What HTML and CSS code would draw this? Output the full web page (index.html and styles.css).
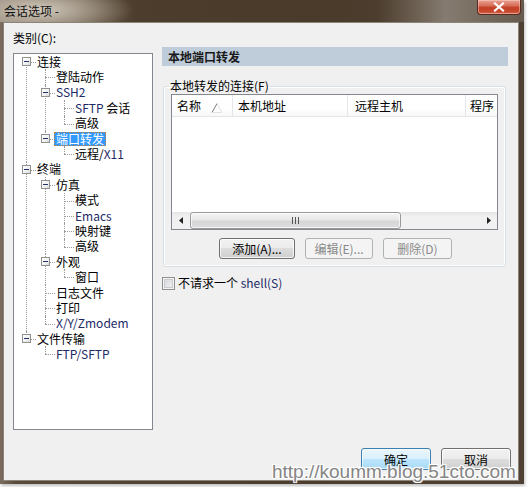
FILE: index.html
```html
<!DOCTYPE html>
<html>
<head>
<meta charset="utf-8">
<link rel="stylesheet" href="styles.css">
</head>
<body>
<div class="window">
  <div class="titlebar">
    <span class="title">会话选项 -</span>
    <span class="close"><svg width="14" height="10" viewBox="0 0 14 10"><path d="M3 1.5 L11 8.5 M11 1.5 L3 8.5" stroke="#fff" stroke-width="2.2" stroke-linecap="square"/></svg></span>
  </div>
  <div class="client">
    <div class="main">
      <div class="left">
        <div class="cat-label">类别(C):</div>
        <div class="tree-box">
          <ul class="tree root">
            <li><div class="row"><span class="tog"></span><span class="txt">连接</span></div>
              <ul>
                <li><div class="row"><span class="sp"></span><span class="txt">登陆动作</span></div></li>
                <li><div class="row"><span class="tog"></span><span class="txt lat">SSH2</span></div>
                  <ul>
                    <li><div class="row"><span class="sp"></span><span class="txt"><span class="lat">SFTP</span> 会话</span></div></li>
                    <li><div class="row"><span class="sp"></span><span class="txt">高级</span></div></li>
                  </ul>
                </li>
                <li><div class="row"><span class="tog"></span><span class="txt sel">端口转发</span></div>
                  <ul>
                    <li><div class="row"><span class="sp"></span><span class="txt">远程/<span class="lat">X11</span></span></div></li>
                  </ul>
                </li>
              </ul>
            </li>
            <li><div class="row"><span class="tog"></span><span class="txt">终端</span></div>
              <ul>
                <li><div class="row"><span class="tog"></span><span class="txt">仿真</span></div>
                  <ul>
                    <li><div class="row"><span class="sp"></span><span class="txt">模式</span></div></li>
                    <li><div class="row"><span class="sp"></span><span class="txt lat">Emacs</span></div></li>
                    <li><div class="row"><span class="sp"></span><span class="txt">映射键</span></div></li>
                    <li><div class="row"><span class="sp"></span><span class="txt">高级</span></div></li>
                  </ul>
                </li>
                <li><div class="row"><span class="tog"></span><span class="txt">外观</span></div>
                  <ul>
                    <li><div class="row"><span class="sp"></span><span class="txt">窗口</span></div></li>
                  </ul>
                </li>
                <li><div class="row"><span class="sp"></span><span class="txt">日志文件</span></div></li>
                <li><div class="row"><span class="sp"></span><span class="txt">打印</span></div></li>
                <li><div class="row"><span class="sp"></span><span class="txt lat">X/Y/Zmodem</span></div></li>
              </ul>
            </li>
            <li><div class="row"><span class="tog"></span><span class="txt">文件传输</span></div>
              <ul>
                <li><div class="row"><span class="sp"></span><span class="txt lat">FTP/SFTP</span></div></li>
              </ul>
            </li>
          </ul>
        </div>
      </div>
      <div class="right">
        <div class="panel-head">本地端口转发</div>
        <fieldset class="group">
          <legend>本地转发的连接(F)</legend>
          <div class="listview">
            <div class="lv-head">
              <div class="col c1"><span>名称</span><svg class="sort" width="12" height="10" viewBox="0 0 12 10"><path d="M1 9.5 L6 0.5" stroke="#7d7d7d" stroke-width="1" fill="none"/><path d="M6 0.5 L11 9.5 L1 9.5" stroke="#e2e2e2" stroke-width="1" fill="none"/></svg></div>
              <div class="col c2">本机地址</div>
              <div class="col c3">远程主机</div>
              <div class="col c4">程序</div>
            </div>
            <div class="lv-body"></div>
            <div class="hscroll">
              <div class="sbtn"><svg width="4" height="7" viewBox="0 0 4 7"><path d="M4 0 L0 3.5 L4 7 Z" fill="#222"/></svg></div>
              <div class="track">
                <div class="thumb"><svg width="7" height="7" viewBox="0 0 7 7"><path d="M0.5 0 V7 M3.5 0 V7 M6.5 0 V7" stroke="#555" stroke-width="1"/></svg></div>
              </div>
              <div class="sbtn"><svg width="4" height="7" viewBox="0 0 4 7"><path d="M0 0 L4 3.5 L0 7 Z" fill="#222"/></svg></div>
            </div>
          </div>
          <div class="btn-row">
            <button class="btn w76">添加(A)...</button>
            <button class="btn dis w68">编辑(E)...</button>
            <button class="btn dis w69">删除(D)</button>
          </div>
        </fieldset>
        <label class="chk"><span class="box"></span><span>不请求一个 <span class="lat2">shell(S)</span></span></label>
      </div>
    </div>
    <div class="footer">
      <button class="btn def w70">确定</button>
      <button class="btn w70">取消</button>
    </div>
  </div>
  <div class="watermark">http://koumm.blog.51cto.com</div>
</div>
</body>
</html>
```
FILE: styles.css
```css
* { box-sizing: border-box; }
html, body {
  margin: 0;
  padding: 0;
  background: #ffffff;
  width: 528px;
  height: 487px;
  overflow: hidden;
}
body {
  font-family: "Noto Sans CJK SC", "Noto Sans", sans-serif;
  font-size: 12px;
  color: #000;
}
.window {
  position: relative;
  width: 524px;
  height: 484px;
  background: linear-gradient(to right, #7b6e60 0%, #5a4a3a 3%, #4c3d2e 50%, #4e4032 100%);
  display: flex;
  flex-direction: column;
  box-shadow: 1px 2px 3px rgba(0,0,0,0.25);
}
.titlebar {
  height: 22px;
  display: flex;
  align-items: flex-start;
  background:
    radial-gradient(ellipse 95px 26px at 38px 10px, rgba(215,207,195,0.95) 0%, rgba(190,180,165,0.7) 45%, rgba(160,150,135,0) 100%),
    linear-gradient(to right, #8a7e70 0%, #6e604f 14%, #4d3d2c 26%, #4a3a2a 60%, #4c3d2e 72%, #6f6355 80%, #857b70 85%, #7a7064 90%, #655a4d 100%);
}
.title {
  padding: 3px 0 0 4px;
  font-size: 12px;
  line-height: 15px;
  color: #111;
}
.close {
  margin-left: auto;
  margin-right: 3px;
  width: 44px;
  height: 15px;
  border: 1px solid #5a2a20;
  border-top: none;
  border-radius: 0 0 4px 4px;
  background: linear-gradient(to bottom, #e9a394 0%, #d86e58 40%, #c23f24 55%, #c84a2e 85%, #d9735c 100%);
  box-shadow: inset 0 0 0 1px rgba(255,220,210,0.45);
  display: flex;
  align-items: center;
  justify-content: center;
}
.client {
  margin: 0 5px 3px 3px;
  flex: 1;
  background: #f0f0f0;
  border: 1px solid #8d8478;
  display: flex;
  flex-direction: column;
  padding: 7px 7px 10px 9px;
}
.main {
  display: flex;
  gap: 9px;
  align-items: flex-start;
}
.left { width: 140px; flex: none; }
.cat-label {
  line-height: 16px;
  height: 16px;
}
.tree-box {
  margin-top: 7px;
  height: 377px;
  background: #fff;
  border: 1px solid #828790;
  overflow: hidden;
}
.tree, .tree ul {
  list-style: none;
  margin: 0;
  padding: 0;
}
.tree ul { padding-left: 19px; }
.tree li { position: relative; }
.tree li::before {
  content: "";
  position: absolute;
  left: 12px;
  top: 0;
  bottom: 0;
  border-left: 1px dotted #9a9a9a;
}
.tree li:last-child::before { bottom: auto; height: 8px; }
.tree.root > li:first-child::before { top: 8px; }
.row {
  position: relative;
  height: 15.4px;
  display: flex;
  align-items: center;
  padding-left: 8px;
}
.row::before {
  content: "";
  position: absolute;
  left: 12px;
  top: 8px;
  width: 10px;
  border-top: 1px dotted #9a9a9a;
}
.tog, .sp {
  position: relative;
  z-index: 1;
  width: 9px;
  height: 9px;
  margin-right: 6px;
  flex: none;
}
.tog {
  border: 1px solid #919191;
  background: linear-gradient(135deg, #ffffff 0%, #f0f0f0 60%, #d8d8d8 100%);
}
.tog::after {
  content: "";
  position: absolute;
  left: 1px;
  top: 3px;
  width: 5px;
  height: 1px;
  background: #24306a;
}
.txt {
  position: relative;
  z-index: 1;
  line-height: 14px;
  white-space: nowrap;
  color: #000;
}
.lat { color: #1d2a66; }
.txt.sel {
  background: #3399ff;
  color: #fff;
  padding: 0 2px;
  margin-left: -2px;
  outline: 1px dotted #c08040;
  outline-offset: -1px;
}
.right {
  width: 346px;
  flex: none;
  margin-top: 17px;
}
.panel-head {
  height: 19px;
  line-height: 19px;
  background: #bfcddb;
  padding-left: 6px;
  font-weight: bold;
  color: #1a1a1a;
}
.group {
  min-width: 0;
  width: 343px;
  margin: 13px 0 0 1px;
  border: 1px solid #d5dfe5;
  border-radius: 3px;
  padding: 1px 7px 7px 7px;
  box-shadow: inset 0 0 0 1px #ffffff;
}
.group legend {
  padding: 0 1px;
  margin-left: -2px;
  line-height: 14px;
  font-size: 12px;
}
.listview {
  width: 327px;
  height: 136px;
  background: #fff;
  border: 1px solid #828790;
  display: flex;
  flex-direction: column;
  overflow: hidden;
}
.lv-head {
  height: 22px;
  flex: none;
  display: flex;
  border-bottom: 1px solid #e5e5e5;
  background: linear-gradient(#ffffff, #ffffff 60%, #f7f8f9);
  overflow: hidden;
  white-space: nowrap;
}
.col {
  display: flex;
  align-items: center;
  padding-left: 5px;
  border-right: 1px solid #e3e6ea;
  flex: none;
}
.c1 { width: 61px; }
.c2 { width: 115px; }
.c3 { width: 118px; padding-left: 7px; }
.c4 { width: 60px; padding-left: 4px; border-right: none; }
.sort { margin-left: auto; margin-right: 9px; margin-top: 5px; }
.lv-body { flex: 1; }
.hscroll {
  height: 17px;
  flex: none;
  display: flex;
  background: linear-gradient(#e6e6e6, #f1f1f1 30%, #f1f1f1);
}
.sbtn {
  width: 17px;
  display: flex;
  align-items: center;
  justify-content: center;
  flex: none;
}
.track {
  flex: 1;
  display: flex;
  padding: 0 0 0 1px;
  min-width: 0;
}
.thumb {
  width: 211px;
  flex: none;
  border: 1px solid #9a9a9a;
  border-radius: 3px;
  background: linear-gradient(to bottom, #f4f4f4 0%, #e8e8e8 45%, #d6d6d6 55%, #dcdcdc 100%);
  box-shadow: inset 0 0 0 1px rgba(255,255,255,0.7);
  display: flex;
  align-items: center;
  justify-content: center;
}
.btn-row {
  display: flex;
  justify-content: center;
  gap: 10px;
  margin-top: 8px;
  padding-left: 2px;
}
.btn {
  font-family: "Noto Sans CJK SC", "Noto Sans", sans-serif;
  font-size: 12px;
  height: 21px;
  padding: 0;
  line-height: 17px;
  color: #000;
  border: 1px solid #707070;
  border-radius: 3px;
  background: linear-gradient(to bottom, #f2f2f2 0%, #ebebeb 50%, #dddddd 50%, #cfcfcf 100%);
  box-shadow: inset 0 0 0 1px rgba(255,255,255,0.75);
}
.btn.dis {
  border-color: #adb2b5;
  background: #f4f4f4;
  color: #8a8a8a;
  box-shadow: none;
}
.btn.def {
  border-color: #3c7fb1;
  background: linear-gradient(to bottom, #eaf6fd 0%, #d9f0fc 50%, #bee6fd 50%, #a7d9f5 100%);
  box-shadow: inset 0 0 0 1px rgba(255,255,255,0.6);
}
.w76 { width: 76px; }
.w68 { width: 68px; }
.w69 { width: 69px; }
.w70 { width: 70px; height: 22px; }
.chk {
  display: flex;
  align-items: center;
  gap: 3px;
  margin-top: 9px;
  line-height: 14px;
}
.chk .box {
  width: 13px;
  height: 13px;
  border: 1px solid #8e8f8f;
  background: linear-gradient(135deg, #d2d4d6, #f4f4f4);
  box-shadow: inset 0 0 0 1px #f4f4f4, inset 0 0 0 2px #c9cbcf;
}
.lat2 { color: #1d2a66; }
.footer {
  margin-top: auto;
  display: flex;
  justify-content: flex-end;
  gap: 10px;
}
.watermark {
  position: absolute;
  left: 272px;
  top: 461px;
  font-family: "Liberation Sans", Arial, sans-serif;
  font-size: 19px;
  line-height: 22px;
  color: #858585;
  white-space: nowrap;
  text-shadow: 1px 1px 0 #fff, -1px -1px 0 #fff, 1px -1px 0 #fff, -1px 1px 0 #fff, 0 0 3px #fff;
}
```
